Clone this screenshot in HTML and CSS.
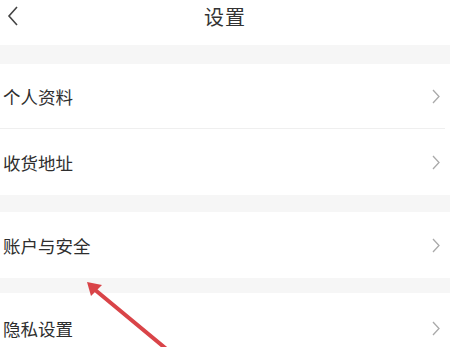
FILE: index.html
```html
<!DOCTYPE html>
<html lang="zh">
<head>
<meta charset="utf-8">
<link rel="stylesheet" href="styles.css">
</head>
<body>
<div class="page">
  <header class="topbar">
    <svg class="back" width="12" height="20" viewBox="0 0 12 20"><path d="M10 1 L2 10 L10 19" fill="none" stroke="#444" stroke-width="1.6"/></svg>
    <h1 class="title">设置</h1>
  </header>
  <div class="band band-1"></div>
  <div class="row row-a"><span class="label">个人资料</span><svg class="chev" width="8" height="15" viewBox="0 0 8 15"><path d="M1 1 L7 7.5 L1 14" fill="none" stroke="#aaa" stroke-width="1.3"/></svg></div>
  <div class="row row-b"><span class="label">收货地址</span><svg class="chev" width="8" height="15" viewBox="0 0 8 15"><path d="M1 1 L7 7.5 L1 14" fill="none" stroke="#aaa" stroke-width="1.3"/></svg></div>
  <div class="band band-2"></div>
  <div class="row row-c"><span class="label">账户与安全</span><svg class="chev" width="8" height="15" viewBox="0 0 8 15"><path d="M1 1 L7 7.5 L1 14" fill="none" stroke="#aaa" stroke-width="1.3"/></svg></div>
  <div class="band band-3"></div>
  <div class="row row-d"><span class="label">隐私设置</span><svg class="chev" width="8" height="15" viewBox="0 0 8 15"><path d="M1 1 L7 7.5 L1 14" fill="none" stroke="#aaa" stroke-width="1.3"/></svg></div>
  <svg class="arrow" width="450" height="347" viewBox="0 0 450 347">
    <line x1="170" y1="352" x2="94" y2="289" stroke="#d94448" stroke-width="4" stroke-linecap="round"/>
    <polygon points="87,282 102,285 91,296" fill="#d94448"/>
  </svg>
</div>
</body>
</html>
```
FILE: styles.css
```css
html, body {
  margin: 0;
  padding: 0;
  background: #fff;
}
.page {
  position: relative;
  width: 450px;
  height: 347px;
  overflow: hidden;
  font-family: "Noto Sans CJK SC", "Noto Sans", sans-serif;
  color: #333;
}
.topbar {
  height: 45px;
  display: flex;
  align-items: center;
  justify-content: center;
  position: relative;
}
.back {
  position: absolute;
  left: 7px;
  top: 6px;
}
.title {
  margin: 0;
  margin-top: -12px;
  font-size: 20px;
  font-weight: 400;
  color: #333;
  letter-spacing: 1px;
}
.band {
  background: #f6f6f6;
}
.band-1 { height: 19px; }
.band-2 { height: 17px; }
.band-3 { height: 15px; }
.row {
  display: flex;
  align-items: center;
  justify-content: space-between;
  padding: 0 10px 0 3px;
  box-sizing: border-box;
}
.row-a {
  height: 65px;
  border-bottom: 1px solid #efefef;
  margin: 0 5px 0 0;
  padding-right: 5px;
}
.row-b { height: 66px; }
.row-c { height: 66px; }
.row-d { height: 70px; }
.label {
  font-size: 17.5px;
  color: #2e2e2e;
  letter-spacing: 0;
}
.chev {
  display: block;
}
.arrow {
  position: absolute;
  left: 0;
  top: 0;
  pointer-events: none;
}
```
